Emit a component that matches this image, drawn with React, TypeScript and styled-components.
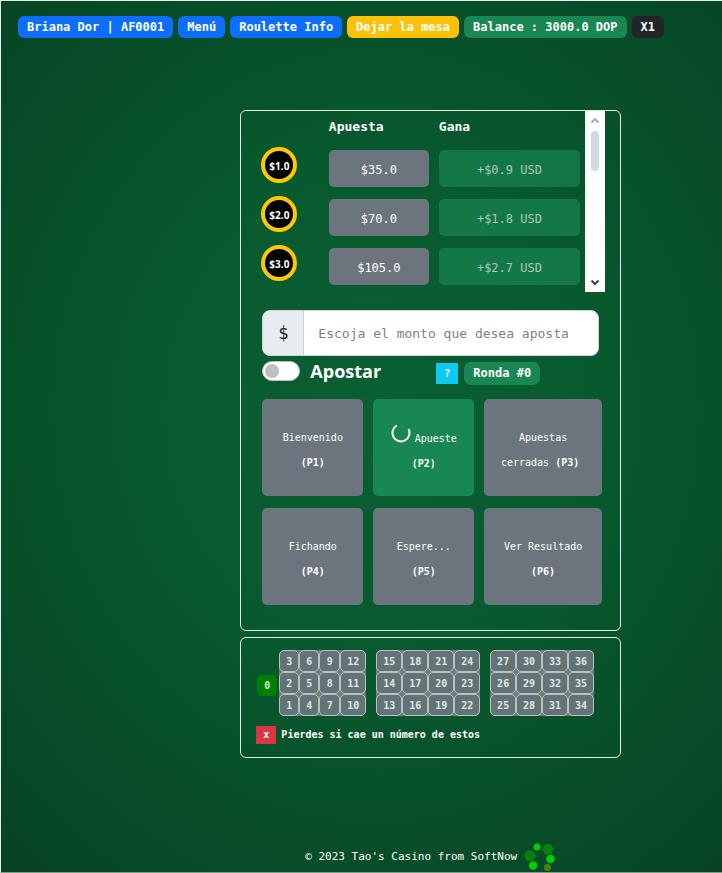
import React from "react";
import styled, { createGlobalStyle, keyframes } from "styled-components";

const mono = `"DejaVu Sans Mono", "Liberation Mono", monospace`;
const sans = `"Open Sans", "Noto Sans", sans-serif`;

const colors = {
  blue: "#0d6efd",
  yellow: "#ffc107",
  green: "#198754",
  dark: "#212529",
  gray: "#6c757d",
  red: "#dc3545",
  cyan: "#0dcaf0",
};

const GlobalStyle = createGlobalStyle`
  * { box-sizing: border-box; }
  body {
    margin: 0;
    font-family: ${mono};
    color: #fff;
    background: #07431f;
  }
  button, input { font-family: inherit; margin: 0; }
`;

const Page = styled.div`
  display: flex;
  flex-direction: column;
  min-height: 100vh;
  border: 1px solid #e8ecea;
  border-width: 1px 0 1px 1px;
  border-bottom-color: #8a9590;
  background: radial-gradient(ellipse 78% 72% at 52% 47%, #095f32 0%, #085b2f 35%, #074c28 75%, #064224 100%);
`;

const TopBar = styled.nav`
  display: flex;
  flex-wrap: wrap;
  gap: 5px;
  padding: 15px 17px;
`;

const Badge = styled.button<{ $bg: string }>`
  height: 22px;
  padding: 0 9px;
  border: 0;
  border-radius: 6px;
  background: ${(p) => p.$bg};
  color: #fff;
  font-size: 12px;
  font-weight: 700;
  line-height: 22px;
  white-space: nowrap;
`;

const Main = styled.main`
  display: flex;
  flex: 1;
  flex-direction: column;
  gap: 6px;
  margin: 57px 14% 0 33.2%;
`;

const Panel = styled.section`
  border: 1px solid #e4ebe7;
  border-radius: 6px;
`;

const ScrollArea = styled.div`
  display: flex;
  height: 181px;
  margin-right: 15px;
`;

const BetTable = styled.table`
  flex: 1;
  height: 180px;
  table-layout: fixed;
  border-collapse: collapse;
`;

const HeadCell = styled.th<{ $width: string }>`
  width: ${(p) => p.$width};
  height: 33px;
  padding: 0 5px;
  font-size: 13px;
  line-height: 31px;
  text-align: left;
  vertical-align: top;
`;

const ChipCell = styled.td`
  height: 49px;
  padding: 3px 0 0 20px;
  vertical-align: top;
`;

const Cell = styled.td`
  height: 49px;
  padding: 0 5px;
`;

const Chip = styled.div`
  display: flex;
  align-items: center;
  justify-content: center;
  width: 36px;
  height: 36px;
  padding-top: 2px;
  border: 4px solid #ffc800;
  border-radius: 50%;
  background: #000;
  font-family: ${sans};
  font-size: 10px;
  font-weight: 700;
`;

const AmountButton = styled.button<{ $win?: boolean }>`
  display: block;
  width: 100%;
  height: 37px;
  padding: 2px 0 0;
  border: 0;
  border-radius: 5px;
  background: ${(p) => (p.$win ? colors.green : colors.gray)};
  opacity: ${(p) => (p.$win ? 0.65 : 1)};
  color: #fff;
  font-size: 12px;
`;

const ScrollBar = styled.div`
  display: flex;
  flex-direction: column;
  align-items: center;
  width: 20px;
  background: #fff;
`;

const Thumb = styled.div`
  width: 8px;
  height: 40px;
  margin-bottom: auto;
  border-radius: 4px;
  background: #d0dae3;
`;

const Controls = styled.div`
  padding: 18px 18px 25px 21px;
`;

const InputGroup = styled.label`
  display: flex;
  height: 46px;
  margin-right: 3px;
  overflow: hidden;
  border: 1px solid #ced4da;
  border-radius: 8px;
  background: #fff;
`;

const Currency = styled.span`
  display: flex;
  align-items: center;
  justify-content: center;
  width: 41px;
  border-right: 1px solid #ced4da;
  background: #e9ecef;
  color: #212529;
  font-size: 17px;
`;

const AmountInput = styled.input`
  flex: 1;
  min-width: 0;
  padding: 0 30px 0 14px;
  border: 0;
  outline: 0;
  background: transparent;
  color: #212529;
  font-size: 13px;
  &::placeholder { color: #7a828a; opacity: 1; }
`;

const BetRow = styled.div`
  display: grid;
  grid-template-columns: 168px auto 1fr;
  column-gap: 6px;
  align-items: start;
  height: 31px;
  margin-bottom: 12px;
  margin-right: 3px;
`;

const SwitchLabel = styled.label`
  display: flex;
  align-items: center;
  gap: 10px;
  height: 29px;
  font-family: ${sans};
  font-size: 18px;
  font-weight: 700;
`;

const Switch = styled.input`
  appearance: none;
  display: flex;
  align-items: center;
  width: 38px;
  height: 20px;
  padding: 0 2px;
  border: 1px solid #bfbfbf;
  border-radius: 10px;
  background: #fff;
  &::before {
    content: "";
    width: 14px;
    height: 14px;
    border-radius: 50%;
    background: #bfbfbf;
  }
  &:checked { justify-content: flex-end; }
`;

const HelpButton = styled.button`
  width: 22px;
  height: 21px;
  margin-top: 7px;
  padding: 0;
  border: 0;
  background: ${colors.cyan};
  color: #fff;
  font-size: 10px;
  font-weight: 700;
`;

const Round = styled.span`
  justify-self: start;
  height: 23px;
  margin-top: 6px;
  padding: 0 9px;
  border-radius: 7px;
  background: ${colors.green};
  font-size: 12px;
  font-weight: 700;
  line-height: 23px;
`;

const Phases = styled.div`
  display: grid;
  grid-template-columns: 101fr 101fr 118fr;
  grid-auto-rows: 97px;
  gap: 12px 10px;
`;

const Phase = styled.button<{ $active?: boolean }>`
  padding: 4px 10px 0;
  border: 0;
  border-radius: 5px;
  background: ${(p) => (p.$active ? colors.green : colors.gray)};
  color: #fff;
  font-size: 10px;
  line-height: 25px;
`;

const spin = keyframes`to { transform: rotate(360deg); }`;

const SpinnerIcon = styled.svg`
  width: 20px;
  height: 20px;
  margin-right: 4px;
  vertical-align: -1px;
  animation: ${spin} 1s linear infinite paused;
`;

const BoardPanel = styled(Panel)`
  padding: 12px 15px 13px;
`;

const Board = styled.div`
  display: grid;
  grid-template-columns: 21px 88fr 114fr 114fr;
  align-items: center;
  margin: 0 11px 0 1px;
`;

const Zero = styled.button`
  width: 20px;
  height: 21px;
  margin-top: 5px;
  padding: 0;
  border: 0;
  border-radius: 5px;
  background: #008000;
  color: #dce8dc;
  font-size: 10px;
  font-weight: 700;
`;

const Dozen = styled.div<{ $first?: boolean }>`
  display: grid;
  grid-template-columns: ${(p) => (p.$first ? "20fr 20fr 21fr 26fr" : "repeat(4, 1fr)")};
  grid-auto-rows: 22px;
  margin-left: ${(p) => (p.$first ? "1px" : "10px")};
  border-radius: 6px;
  background: #6f7e78;
`;

const NumberButton = styled.button`
  padding: 0;
  border: 1px solid #b9c4c0;
  border-radius: 5px;
  background: #637377;
  color: #e2e8e6;
  font-size: 10px;
  font-weight: 700;
`;

const Legend = styled.p`
  display: flex;
  align-items: center;
  gap: 5px;
  margin: 10px 0 0;
  font-size: 10px;
  font-weight: 700;
  line-height: 18px;
  white-space: nowrap;
`;

const LoseMark = styled.span`
  width: 20px;
  background: ${colors.red};
  text-align: center;
`;

const Footer = styled.footer`
  display: flex;
  align-items: center;
  justify-content: center;
  gap: 7px;
  margin: 0 14% 0 33.2%;
  font-size: 11px;
  line-height: 30px;
  white-space: nowrap;
`;

const bets = [
  { chip: "$1.0", stake: "$35.0", win: "+$0.9 USD" },
  { chip: "$2.0", stake: "$70.0", win: "+$1.8 USD" },
  { chip: "$3.0", stake: "$105.0", win: "+$2.7 USD" },
];

const phases = [
  { name: "Bienvenido", code: "(P1)", split: true },
  { name: "Apueste", code: "(P2)", split: true, active: true },
  { name: "Apuestas cerradas", code: "(P3)" },
  { name: "Fichando", code: "(P4)", split: true },
  { name: "Espere...", code: "(P5)", split: true },
  { name: "Ver Resultado", code: "(P6)", split: true },
];

const dozens = [1, 13, 25].map((start) =>
  [2, 1, 0].flatMap((row) => [0, 1, 2, 3].map((col) => start + row + col * 3))
);

const Arrow = ({ up }: { up?: boolean }) => (
  <svg width="20" height="20" viewBox="0 0 20 20" fill="none" aria-hidden="true">
    <path
      d={up ? "M6.500 11.500L10 8L13.500 11.500" : "M6.500 8.500L10 12L13.500 8.500"}
      stroke={up ? "#b0b0b0" : "#484848"}
      strokeWidth="2.200"
    />
  </svg>
);

const Loader = () => (
  <SpinnerIcon viewBox="0 0 20 20" fill="none" aria-hidden="true">
    <path d="M5.800 2.500A8.500 8.500 0 1 0 17.500 6" stroke="#fff" strokeWidth="2" />
  </SpinnerIcon>
);

const DotsLoader = () => (
  <svg width="32" height="30" viewBox="0 0 32 30" aria-hidden="true">
    <circle cx="13" cy="5" r="3.500" fill="#00cc0a" />
    <path d="M18 7l3-5h6l3 5-3 5.500h-6z" fill="#068006" />
    <path d="M0 13.500l3-5h6l3 5-3 5.500H3z" fill="#068006" />
    <circle cx="26.500" cy="17" r="4.300" fill="#00cc0a" />
    <circle cx="9.200" cy="23.500" r="4.300" fill="#00cc0a" />
    <circle cx="23.500" cy="25.500" r="3.500" fill="#4c8003" />
  </svg>
);

export default function App() {
  return (
    <Page>
      <GlobalStyle />
      <TopBar>
        <Badge $bg={colors.blue}>Briana Dor | AF0001</Badge>
        <Badge $bg={colors.blue}>Menú</Badge>
        <Badge $bg={colors.blue}>Roulette Info</Badge>
        <Badge $bg={colors.yellow}>Dejar la mesa</Badge>
        <Badge $bg={colors.green}>Balance : 3000.0 DOP</Badge>
        <Badge $bg={colors.dark}>X1</Badge>
      </TopBar>
      <Main>
        <Panel>
          <ScrollArea>
            <BetTable>
              <thead>
                <tr>
                  <HeadCell $width="24%" aria-label="Ficha" />
                  <HeadCell $width="32%">Apuesta</HeadCell>
                  <HeadCell $width="44%">Gana</HeadCell>
                </tr>
              </thead>
              <tbody>
                {bets.map((bet) => (
                  <tr key={bet.chip}>
                    <ChipCell><Chip>{bet.chip}</Chip></ChipCell>
                    <Cell><AmountButton>{bet.stake}</AmountButton></Cell>
                    <Cell><AmountButton $win disabled>{bet.win}</AmountButton></Cell>
                  </tr>
                ))}
              </tbody>
            </BetTable>
            <ScrollBar>
              <Arrow up />
              <Thumb />
              <Arrow />
            </ScrollBar>
          </ScrollArea>
          <Controls>
            <InputGroup>
              <Currency>$</Currency>
              <AmountInput type="text" placeholder="Escoja el monto que desea apostar" />
            </InputGroup>
            <BetRow>
              <SwitchLabel>
                <Switch type="checkbox" role="switch" />
                Apostar
              </SwitchLabel>
              <HelpButton>?</HelpButton>
              <Round>Ronda #0</Round>
            </BetRow>
            <Phases>
              {phases.map((phase) => (
                <Phase key={phase.code} $active={phase.active}>
                  {phase.active && <Loader />}
                  {phase.name} {phase.split && <br />}
                  <b>{phase.code}</b>
                  {!phase.split && "\u00a0"}
                </Phase>
              ))}
            </Phases>
          </Controls>
        </Panel>
        <BoardPanel>
          <Board>
            <Zero>0</Zero>
            {dozens.map((numbers, i) => (
              <Dozen key={i} $first={i === 0}>
                {numbers.map((n) => (
                  <NumberButton key={n}>{n}</NumberButton>
                ))}
              </Dozen>
            ))}
          </Board>
          <Legend>
            <LoseMark>x</LoseMark>
            Pierdes si cae un número de estos
          </Legend>
        </BoardPanel>
      </Main>
      <Footer>
        © 2023 Tao's Casino from SoftNow
        <DotsLoader />
      </Footer>
    </Page>
  );
}
